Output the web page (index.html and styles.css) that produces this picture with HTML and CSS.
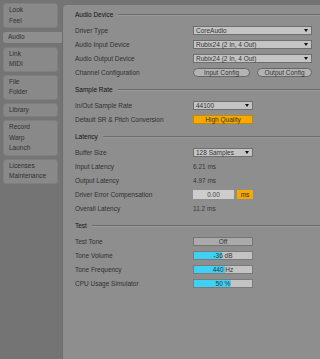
FILE: index.html
```html
<!DOCTYPE html>
<html lang="en">
<head>
    <meta charset="UTF-8">
    <meta name="viewport" content="width=device-width, initial-scale=1.0">
    <title>Preferences - Audio</title>
    <link rel="stylesheet" href="styles.css">
</head>
<body>
    <div class="prefs">
        <nav class="tabs">
            <div class="tab">Look<br>Feel</div>
            <div class="tab active">Audio</div>
            <div class="tab">Link<br>MIDI</div>
            <div class="tab">File<br>Folder</div>
            <div class="tab">Library</div>
            <div class="tab">Record<br>Warp<br>Launch</div>
            <div class="tab">Licenses<br>Maintenance</div>
        </nav>

        <main class="panel">
            <section class="group">
                <div class="group-title">Audio Device</div>
                <div class="row">
                    <span class="label">Driver Type</span>
                    <div class="select wide">CoreAudio</div>
                </div>
                <div class="row">
                    <span class="label">Audio Input Device</span>
                    <div class="select wide">Rubix24 (2 In, 4 Out)</div>
                </div>
                <div class="row">
                    <span class="label">Audio Output Device</span>
                    <div class="select wide">Rubix24 (2 In, 4 Out)</div>
                </div>
                <div class="row">
                    <span class="label">Channel Configuration</span>
                    <div class="btn-pair">
                        <button class="pill in">Input Config</button>
                        <button class="pill out">Output Config</button>
                    </div>
                </div>
            </section>

            <section class="group">
                <div class="group-title">Sample Rate</div>
                <div class="row">
                    <span class="label">In/Out Sample Rate</span>
                    <div class="select">44100</div>
                </div>
                <div class="row">
                    <span class="label">Default SR &amp; Pitch Conversion</span>
                    <button class="toggle on">High Quality</button>
                </div>
            </section>

            <section class="group">
                <div class="group-title">Latency</div>
                <div class="row">
                    <span class="label">Buffer Size</span>
                    <div class="select">128 Samples</div>
                </div>
                <div class="row">
                    <span class="label">Input Latency</span>
                    <span class="value">6.21 ms</span>
                </div>
                <div class="row">
                    <span class="label">Output Latency</span>
                    <span class="value">4.97 ms</span>
                </div>
                <div class="row">
                    <span class="label">Driver Error Compensation</span>
                    <div class="number">
                        <span class="field">0.00</span>
                        <span class="unit">ms</span>
                    </div>
                </div>
                <div class="row">
                    <span class="label">Overall Latency</span>
                    <span class="value">11.2 ms</span>
                </div>
            </section>

            <section class="group">
                <div class="group-title">Test</div>
                <div class="row">
                    <span class="label">Test Tone</span>
                    <button class="toggle">Off</button>
                </div>
                <div class="row">
                    <span class="label">Tone Volume</span>
                    <div class="slider" style="--fill: 49%">-36 dB</div>
                </div>
                <div class="row">
                    <span class="label">Tone Frequency</span>
                    <div class="slider" style="--fill: 54%">440 Hz</div>
                </div>
                <div class="row">
                    <span class="label">CPU Usage Simulator</span>
                    <div class="slider" style="--fill: 63%">50 %</div>
                </div>
            </section>
        </main>
    </div>
</body>
</html>
```

FILE: styles.css
```css
* {
    margin: 0;
    padding: 0;
    box-sizing: border-box;
}

body {
    background: #747474;
    color: #303030;
    font-family: 'Liberation Sans', Arial, sans-serif;
    font-size: 6.5px;
    width: 320px;
    height: 359px;
    overflow: hidden;
}

.prefs {
    display: flex;
    height: 100%;
}

/* left column of tabs */
.tabs {
    width: 62px;
    flex-shrink: 0;
    display: flex;
    flex-direction: column;
    gap: 3px;
    padding: 3px 0 0 3px;
}

.tab {
    width: 55px;
    padding: 1px 5px;
    line-height: 10.5px;
    background: #898989;
    border: 1px solid #7f7f7f;
    border-radius: 3px;
}

.tab.active {
    width: 60px;
    margin: 1px 0;
    padding: 0 5px;
    border: none;
    border-radius: 3px 0 0 3px;
    background: #8e8e8e;
}

/* right settings panel */
.panel {
    flex: 1;
    margin-top: 5px;
    padding: 2px 9px 0 12px;
    background: #8e8e8e;
    border-left: 1px solid #6c6c6c;
    border-top-left-radius: 4px;
}

.group + .group {
    margin-top: 3px;
}

.group-title {
    display: flex;
    align-items: center;
    height: 14px;
    margin-bottom: 2px;
    margin-right: -9px;
    color: #121212;
}

.group-title::after {
    content: '';
    flex: 1;
    height: 1px;
    margin-left: 5px;
    background: #6c6c6c;
    box-shadow: 0 1px 0 #9a9a9a;
}

.row {
    display: grid;
    grid-template-columns: 118px 1fr;
    align-items: center;
    height: 14px;
}

.value {
    color: #383838;
}

.select {
    display: flex;
    align-items: center;
    justify-content: space-between;
    width: 60px;
    height: 9px;
    padding: 0 3px 0 2px;
    background: #c4c4c4;
    border: 1px solid #6e6e6e;
    color: #333;
}

.select.wide {
    width: 119px;
}

.select::after {
    content: '';
    border-left: 2.5px solid transparent;
    border-right: 2.5px solid transparent;
    border-top: 3px solid #111;
}

button {
    font: inherit;
    color: #333;
    cursor: pointer;
}

.btn-pair {
    display: flex;
    gap: 7px;
}

.pill {
    height: 9px;
    background: #b3b3b3;
    border: 1px solid #666;
    border-radius: 5px;
}

.pill.in {
    width: 57px;
}

.pill.out {
    width: 55px;
}

.toggle {
    width: 60px;
    height: 9px;
    background: #aaaaaa;
    border: 1px solid #747474;
}

.toggle.on {
    background: #f7a900;
    border-color: #c78800;
}

.number {
    display: flex;
    gap: 3px;
    height: 9px;
}

.field {
    width: 41px;
    background: #cdcdcd;
    text-align: center;
    line-height: 9px;
    color: #444;
}

.unit {
    width: 16px;
    background: #f7a900;
    text-align: center;
    line-height: 9px;
}

.slider {
    width: 60px;
    height: 9px;
    line-height: 8px;
    text-align: center;
    border: 1px solid #7a7a7a;
    background: linear-gradient(to right, #40d0f3 var(--fill), #c3c3c3 var(--fill));
    color: #333;
}
```
